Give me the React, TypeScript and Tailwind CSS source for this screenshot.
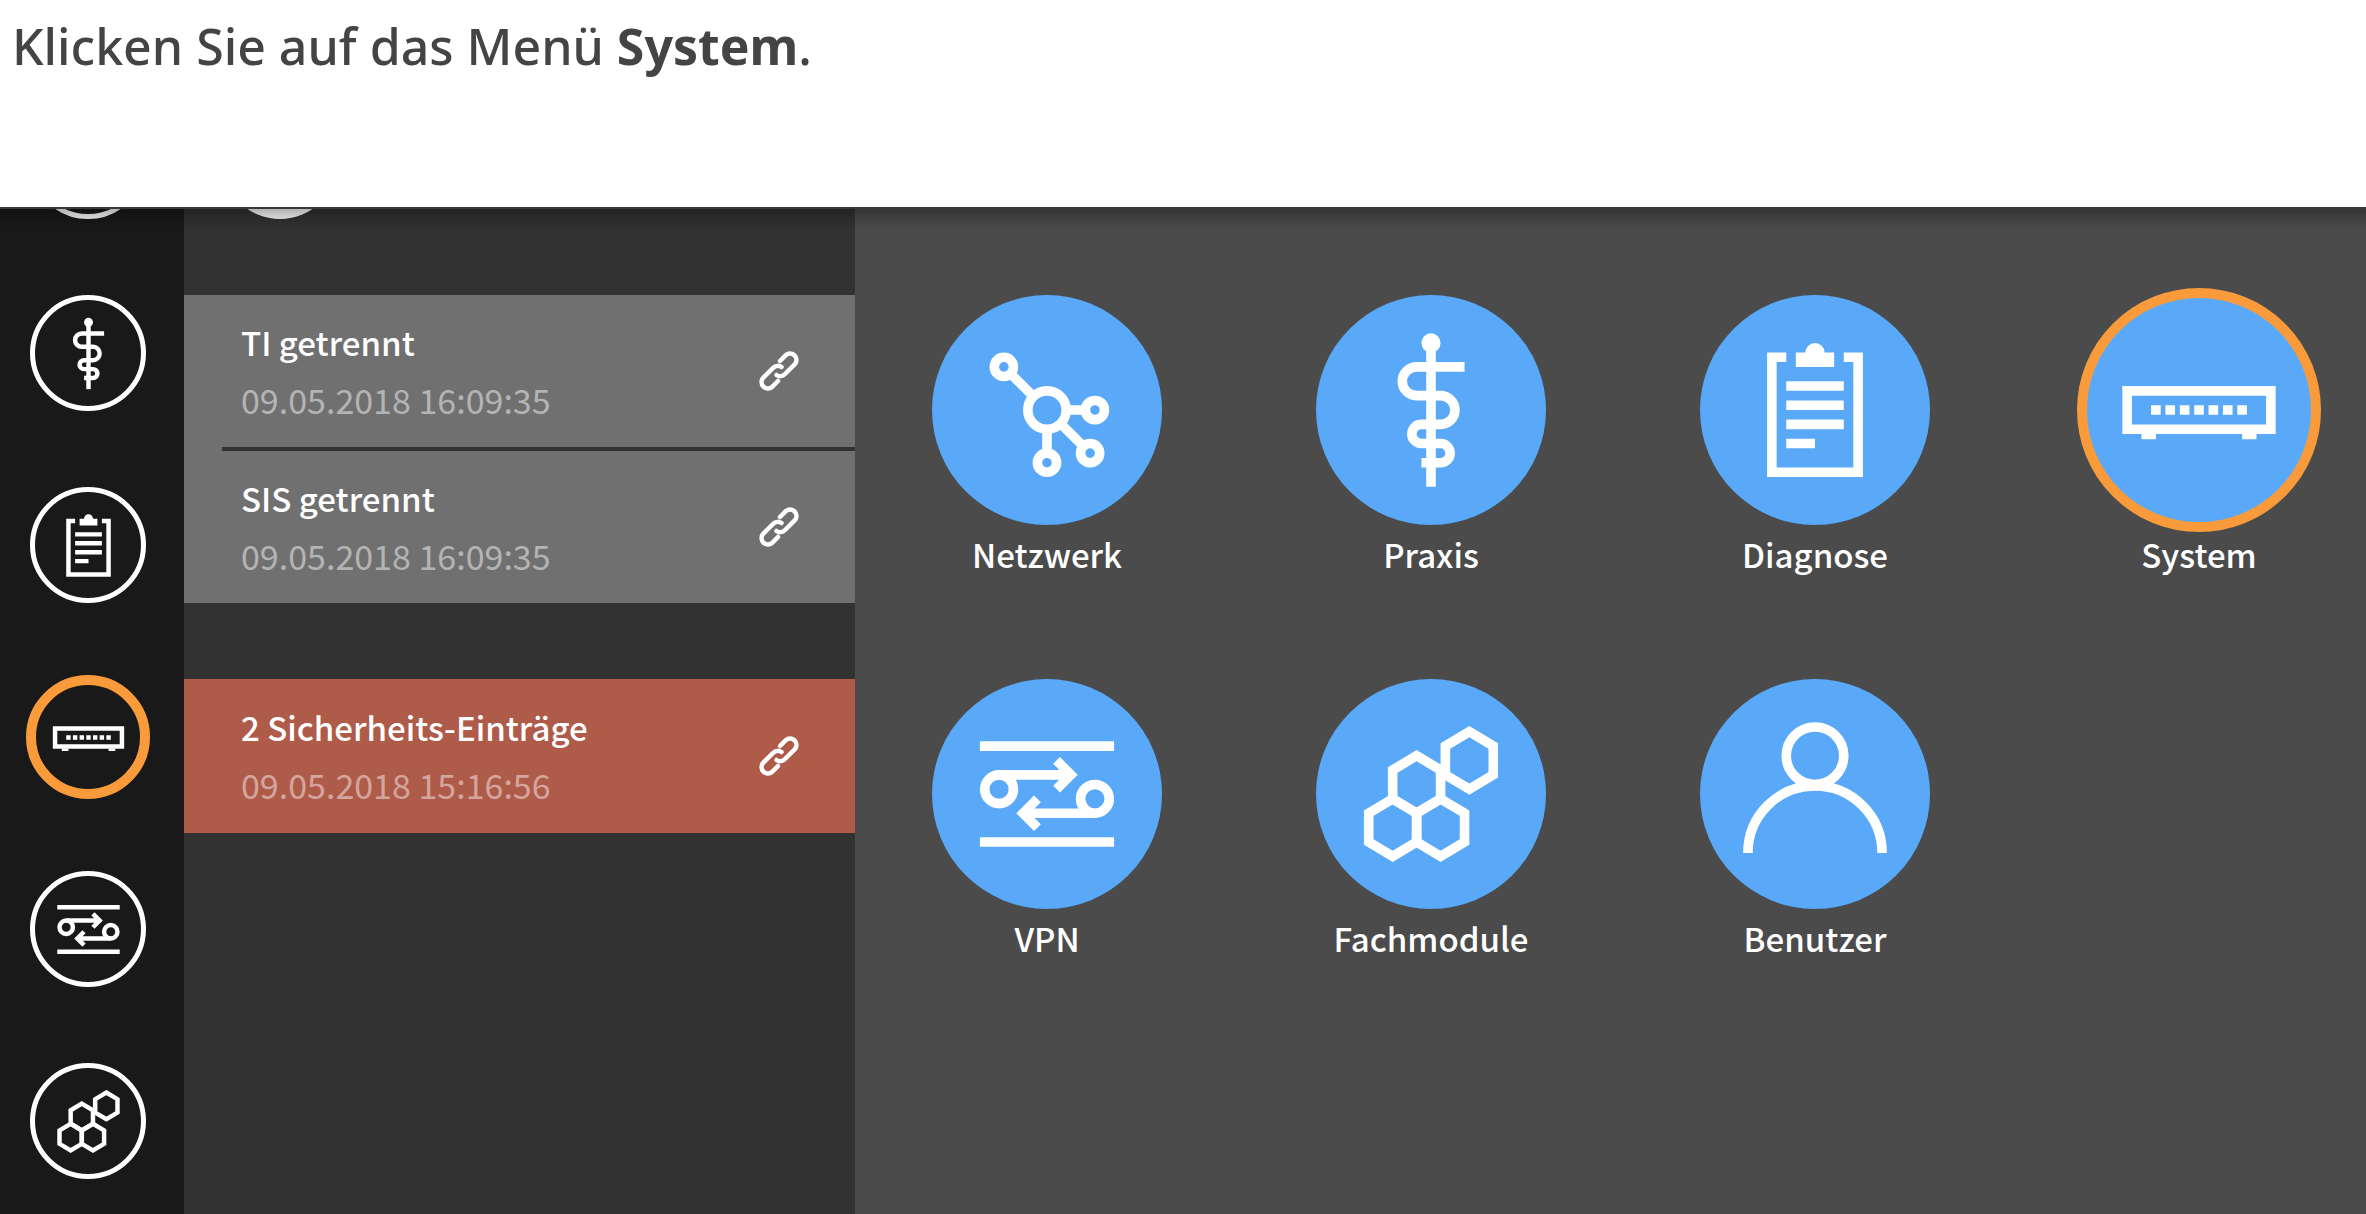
import type { ReactNode } from "react";

type IconName = "network" | "praxis" | "clipboard" | "router" | "vpn" | "modules" | "user";

const ICONS: Record<IconName, ReactNode> = {
  network: (
    <>
      <circle cx="24" cy="24" r="4" />
      <circle cx="15" cy="15" r="2" />
      <circle cx="34" cy="24" r="2" />
      <circle cx="33" cy="33" r="2" />
      <circle cx="24" cy="35" r="2" />
      <path d="M16.5 16.5l4.6 4.6M28.5 24h3.2M27 27l4.5 4.5M24 28.5v4" />
    </>
  ),
  praxis: (
    <>
      <circle cx="24" cy="10" r="2" fill="currentColor" stroke="none" />
      <path d="M24 10v30" />
      <path d="M31 15H21a3 3 0 0 0 0 6h5a3 3 0 0 1 0 6h-4a2 2 0 0 0 0 4h4a2 2 0 0 1 0 4h-4" />
    </>
  ),
  clipboard: (
    <>
      <path d="M18 13h-3v24h18V13h-3" />
      <path d="M18 19h12M18 23h12M18 27h12M18 31h6" />
      <path d="M20 12h2a2 2 0 0 1 4 0h2v3h-8z" fill="currentColor" stroke="none" />
    </>
  ),
  router: (
    <>
      <path d="M9 20h30v8H9z" />
      <path d="M14 24h20" strokeDasharray="2 1" />
      <path d="M12 29.5h3M33 29.5h3" strokeWidth="1.2" />
    </>
  ),
  vpn: (
    <>
      <path d="M10 14h28M10 34h28" />
      <circle cx="14" cy="23" r="3" />
      <circle cx="34" cy="25" r="3" />
      <path d="M14 20h15M26 17l3 3-3 3M34 28H19M22 25l-3 3 3 3" />
    </>
  ),
  modules: (
    <>
      <path d="M32 11l5 3v6l-5 3-5-3v-6z" />
      <path d="M21 16l5 3v6l-5 3-5-3v-6z" />
      <path d="M16 25l5 3v6l-5 3-5-3v-6z" />
      <path d="M26 25l5 3v6l-5 3-5-3v-6z" />
    </>
  ),
  user: (
    <>
      <circle cx="24" cy="16" r="6" />
      <path d="M10 36.3a14 14 0 0 1 28 0" />
    </>
  ),
};

function Icon({ name, className }: { name: IconName; className: string }) {
  return (
    <svg viewBox="0 0 48 48" fill="none" stroke="currentColor" strokeWidth="2" aria-hidden="true" className={className}>
      {ICONS[name]}
    </svg>
  );
}

function LinkIcon() {
  return (
    <svg viewBox="0 0 42 42" fill="none" stroke="currentColor" strokeWidth="4.5" strokeLinecap="round" aria-hidden="true" className="size-[42px] shrink-0">
      <path d="M22 11l6-6a6.400 6.400 0 0 1 9 9l-10 10c-2.500 2.500-6 2.800-8.500 1" />
      <path d="M20 31l-6 6a6.400 6.400 0 0 1-9-9l10-10c2.500-2.500 6-2.800 8.500-1" />
    </svg>
  );
}

const NAV: { icon: IconName; label: string; active?: boolean }[] = [
  { icon: "network", label: "Netzwerk" },
  { icon: "praxis", label: "Praxis" },
  { icon: "clipboard", label: "Diagnose" },
  { icon: "router", label: "System", active: true },
  { icon: "vpn", label: "VPN" },
  { icon: "modules", label: "Fachmodule" },
];

const TILES: { icon: IconName; label: string; active?: boolean }[] = [
  ...NAV,
  { icon: "user", label: "Benutzer" },
];

function Message({ title, time, timeClass }: { title: string; time: string; timeClass: string }) {
  return (
    <a href="#" className="flex h-[152px] items-center justify-between pr-[55px] pl-[57px]">
      <span className="flex flex-col leading-[58px] whitespace-nowrap">
        <span className="text-[33px] font-medium text-white">{title}</span>
        <span className={timeClass}>{time}</span>
      </span>
      <LinkIcon />
    </a>
  );
}

export default function App() {
  return (
    <div className="flex min-h-screen flex-col bg-white">
      <header className="h-[207px] shrink-0 px-3 pt-3">
        <p className="font-['Noto_Sans',sans-serif] text-[50px] leading-[68px] font-medium text-[#444444]">
          Klicken Sie auf das Menü <strong className="font-bold">System</strong>.
        </p>
      </header>

      <div className="relative flex flex-1 overflow-hidden border-t-2 border-[#39393a] bg-[#4b4b4b] font-['Noto_Sans_CJK_SC','Noto_Sans',sans-serif] text-white">
        <nav className="w-[184px] shrink-0 bg-[#191919]">
          <ul className="-mt-[106px] flex flex-col items-center gap-[76px] pr-2">
            {NAV.map((n) => (
              <li key={n.label}>
                <button
                  type="button"
                  aria-label={n.label}
                  className={
                    n.active
                      ? "flex size-[116px] items-center justify-center rounded-full outline-10 -outline-offset-6 outline-[#f99b3a]"
                      : "flex size-[116px] items-center justify-center rounded-full border-5 border-white"
                  }
                >
                  <Icon name={n.icon} className="size-[107px] shrink-0" />
                </button>
              </li>
            ))}
          </ul>
        </nav>

        <aside className="w-[671px] shrink-0 bg-[#323232]">
          <div className="-mt-[106px] ml-[38px] size-[116px] rounded-full bg-white" />
          <div className="mt-[76px] bg-[#707070]">
            <Message title="TI getrennt" time="09.05.2018 16:09:35" timeClass="text-[34px] text-[#b4b4b4]" />
            <hr className="ml-[38px] border-t-4 border-[#323232]" />
            <Message title="SIS getrennt" time="09.05.2018 16:09:35" timeClass="text-[34px] text-[#b4b4b4]" />
          </div>
          <div className="mt-[76px] bg-[#af5b4a] py-px">
            <Message title="2 Sicherheits-Einträge" time="09.05.2018 15:16:56" timeClass="text-[34px] text-[#d4a59c]" />
          </div>
        </aside>

        <main className="flex-1 pt-[86px] pr-[52px] pl-[77px]">
          <div className="grid grid-cols-[repeat(4,230px)] justify-between gap-y-24">
            {TILES.map((t) => (
              <button key={t.label} type="button" className="flex flex-col items-center">
                <span
                  className={
                    t.active
                      ? "flex size-[230px] items-center justify-center rounded-full bg-[#5aa9f9] outline-10 -outline-offset-3 outline-[#f99b3a]"
                      : "flex size-[230px] items-center justify-center rounded-full bg-[#5aa9f9]"
                  }
                >
                  <Icon name={t.icon} className="size-[230px]" />
                </span>
                <span className="text-[33px] leading-[58px] font-medium">{t.label}</span>
              </button>
            ))}
          </div>
        </main>

        <div className="pointer-events-none absolute inset-x-0 top-0 h-5 bg-linear-to-b from-black/30 to-transparent" />
      </div>
    </div>
  );
}
